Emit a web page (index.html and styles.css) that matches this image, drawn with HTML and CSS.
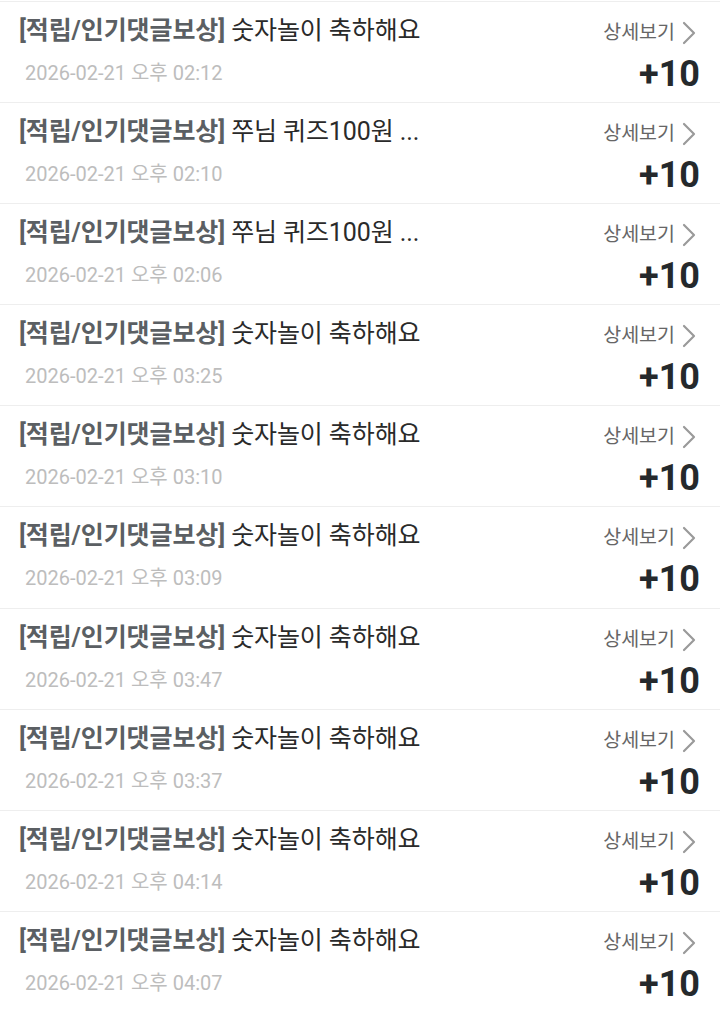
FILE: index.html
```html
<!DOCTYPE html>
<html lang="ko">
<head>
<meta charset="utf-8">
<link rel="stylesheet" href="styles.css">
</head>
<body>
<ul class="list">
  <li class="row">
    <div class="main">
      <p class="title"><b class="tag">[적립/인기댓글보상]</b> 숫자놀이 축하해요</p>
      <p class="date">2026-02-21 오후 02:12</p>
    </div>
    <div class="side">
      <a class="more">상세보기<svg class="chev" viewBox="0 0 14 24" width="14" height="24"><path d="M2 2 L12 12 L2 22" /></svg></a>
      <span class="pts">+10</span>
    </div>
  </li>
  <li class="row">
    <div class="main">
      <p class="title"><b class="tag">[적립/인기댓글보상]</b> 쭈님 퀴즈100원 ...</p>
      <p class="date">2026-02-21 오후 02:10</p>
    </div>
    <div class="side">
      <a class="more">상세보기<svg class="chev" viewBox="0 0 14 24" width="14" height="24"><path d="M2 2 L12 12 L2 22" /></svg></a>
      <span class="pts">+10</span>
    </div>
  </li>
  <li class="row">
    <div class="main">
      <p class="title"><b class="tag">[적립/인기댓글보상]</b> 쭈님 퀴즈100원 ...</p>
      <p class="date">2026-02-21 오후 02:06</p>
    </div>
    <div class="side">
      <a class="more">상세보기<svg class="chev" viewBox="0 0 14 24" width="14" height="24"><path d="M2 2 L12 12 L2 22" /></svg></a>
      <span class="pts">+10</span>
    </div>
  </li>
  <li class="row">
    <div class="main">
      <p class="title"><b class="tag">[적립/인기댓글보상]</b> 숫자놀이 축하해요</p>
      <p class="date">2026-02-21 오후 03:25</p>
    </div>
    <div class="side">
      <a class="more">상세보기<svg class="chev" viewBox="0 0 14 24" width="14" height="24"><path d="M2 2 L12 12 L2 22" /></svg></a>
      <span class="pts">+10</span>
    </div>
  </li>
  <li class="row">
    <div class="main">
      <p class="title"><b class="tag">[적립/인기댓글보상]</b> 숫자놀이 축하해요</p>
      <p class="date">2026-02-21 오후 03:10</p>
    </div>
    <div class="side">
      <a class="more">상세보기<svg class="chev" viewBox="0 0 14 24" width="14" height="24"><path d="M2 2 L12 12 L2 22" /></svg></a>
      <span class="pts">+10</span>
    </div>
  </li>
  <li class="row">
    <div class="main">
      <p class="title"><b class="tag">[적립/인기댓글보상]</b> 숫자놀이 축하해요</p>
      <p class="date">2026-02-21 오후 03:09</p>
    </div>
    <div class="side">
      <a class="more">상세보기<svg class="chev" viewBox="0 0 14 24" width="14" height="24"><path d="M2 2 L12 12 L2 22" /></svg></a>
      <span class="pts">+10</span>
    </div>
  </li>
  <li class="row">
    <div class="main">
      <p class="title"><b class="tag">[적립/인기댓글보상]</b> 숫자놀이 축하해요</p>
      <p class="date">2026-02-21 오후 03:47</p>
    </div>
    <div class="side">
      <a class="more">상세보기<svg class="chev" viewBox="0 0 14 24" width="14" height="24"><path d="M2 2 L12 12 L2 22" /></svg></a>
      <span class="pts">+10</span>
    </div>
  </li>
  <li class="row">
    <div class="main">
      <p class="title"><b class="tag">[적립/인기댓글보상]</b> 숫자놀이 축하해요</p>
      <p class="date">2026-02-21 오후 03:37</p>
    </div>
    <div class="side">
      <a class="more">상세보기<svg class="chev" viewBox="0 0 14 24" width="14" height="24"><path d="M2 2 L12 12 L2 22" /></svg></a>
      <span class="pts">+10</span>
    </div>
  </li>
  <li class="row">
    <div class="main">
      <p class="title"><b class="tag">[적립/인기댓글보상]</b> 숫자놀이 축하해요</p>
      <p class="date">2026-02-21 오후 04:14</p>
    </div>
    <div class="side">
      <a class="more">상세보기<svg class="chev" viewBox="0 0 14 24" width="14" height="24"><path d="M2 2 L12 12 L2 22" /></svg></a>
      <span class="pts">+10</span>
    </div>
  </li>
  <li class="row">
    <div class="main">
      <p class="title"><b class="tag">[적립/인기댓글보상]</b> 숫자놀이 축하해요</p>
      <p class="date">2026-02-21 오후 04:07</p>
    </div>
    <div class="side">
      <a class="more">상세보기<svg class="chev" viewBox="0 0 14 24" width="14" height="24"><path d="M2 2 L12 12 L2 22" /></svg></a>
      <span class="pts">+10</span>
    </div>
  </li>
</ul>
</body>
</html>
```
FILE: styles.css
```css
html, body {
  margin: 0;
  padding: 0;
  background: #fff;
}
body {
  padding-top: 1px;
  font-family: Roboto, "Noto Sans CJK KR", sans-serif;
  color: #222;
}
.list {
  list-style: none;
  margin: 0;
  padding: 0;
  border-top: 1px solid #eee;
}
.row {
  box-sizing: border-box;
  height: 101.1px;
  display: flex;
  justify-content: space-between;
  padding: 0 20px 0 19px;
  border-bottom: 1px solid #eee;
}
.main {
  display: flex;
  flex-direction: column;
  min-width: 0;
}
.title {
  margin: 0;
  padding-top: 13px;
  font-size: 25px;
  line-height: 32px;
  color: #2a2a2a;
  white-space: nowrap;
  letter-spacing: -0.1px;
}
.tag {
  font-weight: 700;
  color: #5b5f63;
}
.date {
  margin: 0;
  padding-top: 14px;
  padding-left: 6px;
  font-size: 20px;
  line-height: 24px;
  color: #bdbdbd;
  white-space: nowrap;
}
.side {
  display: flex;
  flex-direction: column;
  align-items: flex-end;
}
.more {
  display: flex;
  align-items: center;
  gap: 7px;
  margin-top: 17px;
  margin-right: 4px;
  font-size: 19.5px;
  line-height: 28px;
  color: #666;
  text-decoration: none;
}
.chev {
  fill: none;
  stroke: #9a9a9a;
  stroke-width: 2.2;
  stroke-linecap: round;
  stroke-linejoin: round;
}
.pts {
  margin-top: 8px;
  font-size: 36px;
  line-height: 38px;
  font-weight: 700;
  color: #25292c;
}
```
